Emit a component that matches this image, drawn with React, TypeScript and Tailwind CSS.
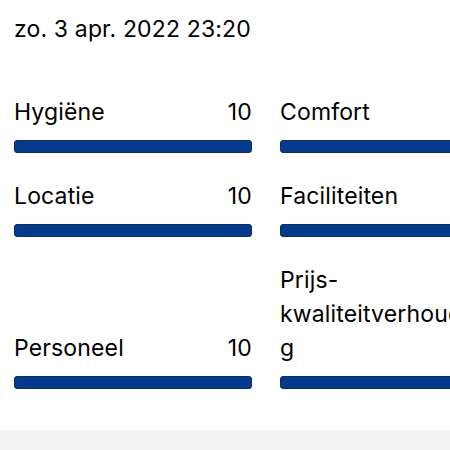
const scores = [
  { label: "Hygiëne", value: 10 },
  { label: "Comfort", value: 10 },
  { label: "Locatie", value: 10 },
  { label: "Faciliteiten", value: 10 },
  { label: "Personeel", value: 10 },
  { label: "Prijs-kwaliteitverhouding", value: 10 },
];

const ScoreBar = ({ label, value }: { label: string; value: number }) => (
  <div className="flex flex-col justify-end">
    <div className="flex items-end justify-between gap-2 leading-[34px]">
      <span className="min-w-0 [overflow-wrap:anywhere]">{label}</span>
      <span>{value}</span>
    </div>
    <div className="mt-[11px] h-[13px] rounded-[3px] border border-[#0c2e68] bg-[#053a8c]" />
  </div>
);

export default function App() {
  return (
    <div
      className="flex h-[450px] w-[450px] flex-col overflow-hidden bg-white text-[23px] tracking-[0.15px] text-black"
      style={{ fontFamily: "Inter, 'Liberation Sans', sans-serif" }}
    >
      <div className="px-[14px] pt-3 leading-[34px]">zo. 3 apr. 2022 23:20</div>
      <div className="mt-[49px] grid w-[532px] shrink-0 grid-cols-[238px_238px] gap-x-[28px] gap-y-[26px] px-[14px]">
        {scores.map((s) => (
          <ScoreBar key={s.label} label={s.label} value={s.value} />
        ))}
      </div>
      <div className="mt-[41px] h-[40px] shrink-0 bg-[#f2f2f2]" />
    </div>
  );
}
